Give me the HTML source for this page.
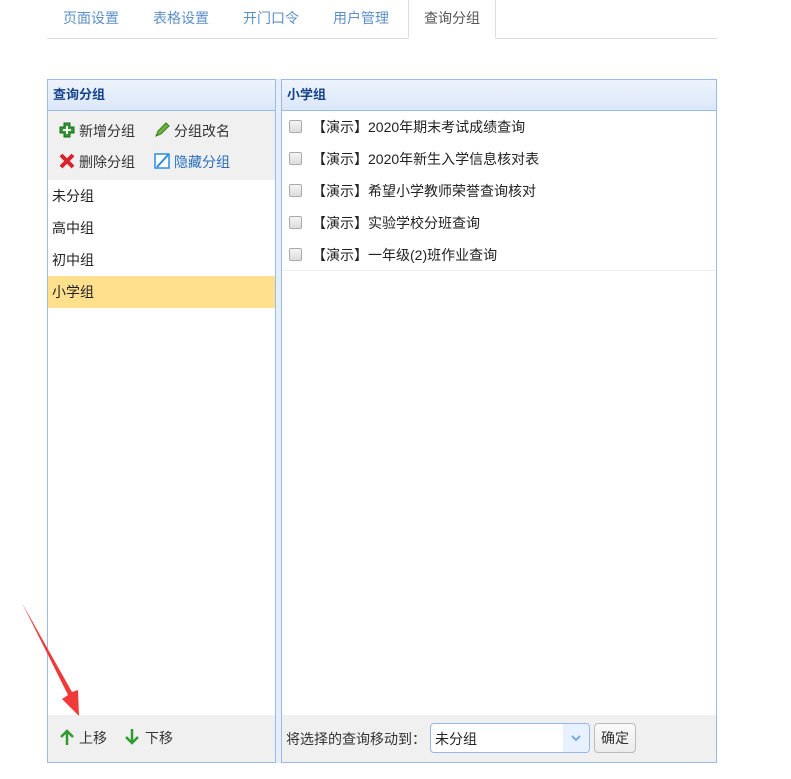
<!DOCTYPE html>
<html><head><meta charset="utf-8"><style>
*{margin:0;padding:0;box-sizing:border-box}
body{width:791px;height:779px;background:#fff;font-family:"Liberation Sans","Noto Sans CJK SC",sans-serif;font-size:14px;color:#333;position:relative;overflow:hidden}
.abs{position:absolute}
.tabs{left:47px;top:0;width:670px;height:39px;border-bottom:1px solid #ddd}
.tab{position:absolute;top:0;height:39px;line-height:37px;color:#5b8fc9;font-size:14px}
.tab.active{color:#555;background:#fff;border:1px solid #ddd;border-top:none;border-bottom:1px solid #fff;text-align:center}
.panel{border:1px solid #99bbe8;background:#fff}
.hdr{height:31px;line-height:30px;background:linear-gradient(#eef4fd,#dbe7f8);border-bottom:1px solid #99bbe8;font-weight:bold;color:#15428b;padding-left:5px;font-size:13px}
.grey{background:#f0f0f0}
.li{height:32px;line-height:32px;padding-left:4px;color:#222;font-size:14px}
.row{height:32px;line-height:32px;position:relative;color:#222;font-size:14px}
.cb{position:absolute;left:7px;top:9px;width:13px;height:13px;border:1px solid #aaa;border-radius:2px;background:linear-gradient(#f4f4f4,#ddd)}
.row span{position:absolute;left:30px}
</style></head><body>
<div class="abs tabs">
 <div class="tab" style="left:16px">页面设置</div>
 <div class="tab" style="left:106px">表格设置</div>
 <div class="tab" style="left:196px">开门口令</div>
 <div class="tab" style="left:286px">用户管理</div>
 <div class="tab active" style="left:361px;width:88px">查询分组</div>
</div>
<div class="abs" style="left:275px;top:79px;width:7px;height:684px;background:#e6eef9"></div>
<div class="abs panel" style="left:47px;top:79px;width:229px;height:684px">
 <div class="hdr">查询分组</div>
 <div class="grey" style="height:69px;position:relative">
  <svg class="abs" style="left:11px;top:11px" width="16" height="16" viewBox="0 0 16 16"><path d="M5 1h6v4h4v6h-4v4H5v-4H1V5h4z" fill="#2f9a2f" stroke="#1c6b1c"/><path d="M8 4v8M4 8h8" stroke="#fff" stroke-width="2"/></svg>
  <div class="abs" style="left:31px;top:10px">新增分组</div>
  <svg class="abs" style="left:106px;top:11px" width="16" height="16" viewBox="0 0 16 16"><path d="M2 14l2-5 8-8 3 3-8 8z" fill="#6bb33a" stroke="#3d7a1c"/></svg>
  <div class="abs" style="left:126px;top:10px">分组改名</div>
  <svg class="abs" style="left:11px;top:42px" width="16" height="16" viewBox="0 0 16 16"><path d="M2 2l12 12M14 2L2 14" stroke="#d8232a" stroke-width="4"/></svg>
  <div class="abs" style="left:31px;top:41px">删除分组</div>
  <svg class="abs" style="left:106px;top:42px" width="16" height="16" viewBox="0 0 16 16"><rect x="1" y="1" width="14" height="14" fill="#fff" stroke="#2a8be0" stroke-width="1.5"/><path d="M3 14L14 2" stroke="#2a8be0" stroke-width="2"/></svg>
  <div class="abs" style="left:126px;top:41px;color:#2a6ebb">隐藏分组</div>
 </div>
 <div class="li">未分组</div>
 <div class="li">高中组</div>
 <div class="li">初中组</div>
 <div class="li" style="background:#fee08d">小学组</div>
 <div class="abs grey" style="left:0;top:635px;width:227px;height:47px">
  <svg class="abs" style="left:11px;top:13px" width="16" height="18" viewBox="0 0 16 18"><path d="M8 17V3M2 9l6-6 6 6" stroke="#2f9a2f" stroke-width="2.5" fill="none"/></svg>
  <div class="abs" style="left:31px;top:13px">上移</div>
  <svg class="abs" style="left:76px;top:13px" width="16" height="18" viewBox="0 0 16 18"><path d="M8 1v14M2 9l6 6 6-6" stroke="#2f9a2f" stroke-width="2.5" fill="none"/></svg>
  <div class="abs" style="left:97px;top:13px">下移</div>
 </div>
</div>
<div class="abs panel" style="left:281px;top:79px;width:436px;height:684px">
 <div class="hdr">小学组</div>
 <div class="row"><div class="cb"></div><span>【演示】2020年期末考试成绩查询</span></div>
 <div class="row"><div class="cb"></div><span>【演示】2020年新生入学信息核对表</span></div>
 <div class="row"><div class="cb"></div><span>【演示】希望小学教师荣誉查询核对</span></div>
 <div class="row"><div class="cb"></div><span>【演示】实验学校分班查询</span></div>
 <div class="row" style="border-bottom:1px solid #eee"><div class="cb"></div><span>【演示】一年级(2)班作业查询</span></div>
 <div class="abs grey" style="left:0;top:635px;width:434px;height:47px">
  <div class="abs" style="left:4px;top:14px">将选择的查询移动到：</div>
  <div class="abs" style="left:148px;top:8px;width:160px;height:30px;border:1px solid #95b8e7;border-radius:4px;background:#fff;overflow:hidden">
   <div class="abs" style="left:4px;top:5px;font-size:14px;color:#222">未分组</div>
   <div class="abs" style="right:0;top:0;width:26px;height:28px;background:#e8f1ff"><svg class="abs" style="left:8px;top:11px" width="10" height="7"><path d="M1 1l4 4 4-4" stroke="#7aaee0" stroke-width="2" fill="none"/></svg></div>
  </div>
  <div class="abs" style="left:312px;top:8px;width:42px;height:30px;border:1px solid #bbb;border-radius:4px;background:linear-gradient(#fafafa,#ececec);text-align:center;line-height:28px">确定</div>
 </div>
</div>
<svg class="abs" style="left:0;top:0" width="791" height="779"><path d="M22 603L68 695 62 699 79 716 78 690 72 692Z" fill="#f03a3a"/></svg>
</body></html>
